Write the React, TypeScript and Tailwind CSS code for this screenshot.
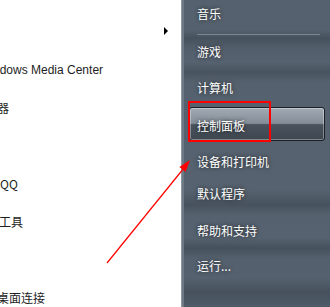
const leftItems = [
  { text: 'Windows Media Center', shift: 'ml-[-21px]', latin: true },
  { text: '计算器', shift: 'ml-[-27px]' },
  { text: '', shift: '' },
  { text: '腾讯QQ', shift: 'ml-[-24px]' },
  { text: '截图工具', shift: 'ml-[-25px]' },
  { text: '', shift: '' },
  { text: '远程桌面连接', shift: 'ml-[-27px]' },
]

function Item({ label, className }: { label: string; className: string }) {
  return (
    <div className={`shrink-0 flex items-center pl-[15px] h-[28px] text-[12px] text-white [text-shadow:0_0_4px_rgba(0,0,0,0.7)] ${className}`}>
      {label}
    </div>
  )
}

export default function App() {
  return (
    <div className="relative w-[330px] h-[307px] overflow-hidden flex [font-family:'Noto_Sans_CJK_SC','Noto_Sans',sans-serif]">
      {/* left: pinned programs */}
      <div className="w-[181px] h-full bg-white flex flex-col overflow-hidden">
        <div className="shrink-0 h-[51px] pt-[27px] pl-[164px]">
          <svg width="4" height="8" viewBox="0 0 4 8">
            <polygon points="0,0 4,4 0,8" fill="#000" />
          </svg>
        </div>
        {leftItems.map((it, i) => (
          <div key={i} className="shrink-0 h-[38px] flex items-center whitespace-nowrap text-[12px] text-[#1e1e1e]">
            <span className={`${it.shift} ${it.latin ? "[font-family:'Liberation_Sans',Arial,sans-serif]" : ''}`}>{it.text}</span>
          </div>
        ))}
      </div>

      {/* right: glass panel */}
      <div className="flex-1 h-full flex flex-col border-l border-[#8c97a2] shadow-[inset_2px_0_0_#6c7884] bg-[linear-gradient(to_bottom,#55616e_0px,#55616e_30px,#46515d_38px,#525e6b_48px,#56626f_62px,#48535f_72px,#55616e_82px,#56626f_190px,#47525e_205px,#55616e_215px,#56626f_238px,#46515d_248px,#54606d_258px,#55616e_278px,#46515d_292px,#4f5b68_307px)]">
        <Item label="音乐" className="h-[26px]" />
        <div className="shrink-0 ml-[15px] mr-[10px] mt-[6px] h-px bg-[#7a8692]" />
        <Item label="游戏" className="mt-[3px]" />
        <Item label="计算机" className="mt-[8px]" />
        <div className="shrink-0 mt-[5px] ml-[7px] mr-[5px] h-[34px] rounded-[3px] border border-[#1b2027] shadow-[inset_0_0_0_1px_rgba(255,255,255,0.35)] bg-[linear-gradient(to_bottom,#a2abb4_0%,#838d97_48%,#4a535d_52%,#3e4750_100%)] flex items-center pl-[7px] pt-[3px] text-[12px] text-white [text-shadow:0_0_4px_rgba(0,0,0,0.8)]">
          控制面板
        </div>
        <Item label="设备和打印机" className="mt-[7px]" />
        <Item label="默认程序" className="mt-[4px]" />
        <Item label="帮助和支持" className="mt-[9px]" />
        <Item label="运行..." className="mt-[7px]" />
      </div>

      {/* red annotation */}
      <svg className="absolute inset-0 pointer-events-none" width="330" height="307" viewBox="0 0 330 307">
        <rect x="189" y="102" width="81" height="39" fill="none" stroke="#ff0000" strokeWidth="2" />
        <line x1="107" y1="263" x2="184" y2="168" stroke="#ff0000" strokeWidth="1.2" />
        <polygon points="190,160 179.4,166.9 185.6,171.9" fill="#ff0000" />
      </svg>
    </div>
  )
}
